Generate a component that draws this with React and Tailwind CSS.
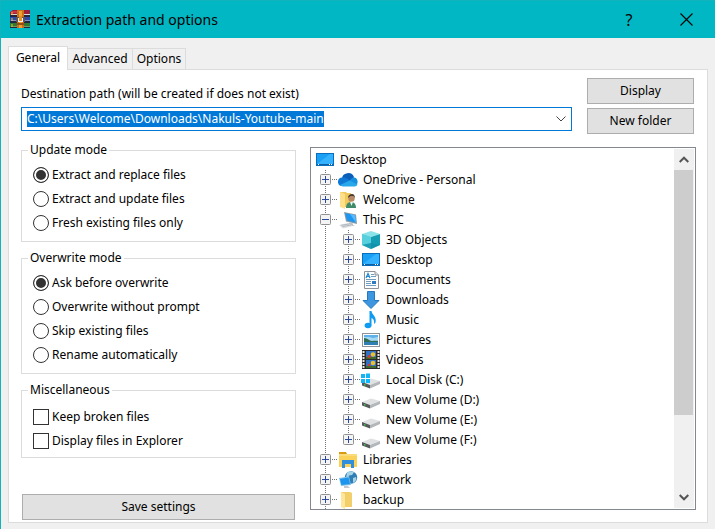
import { useEffect, useRef } from "react";

function ArchiveIcon() {
  return (
    <svg width="20" height="20" viewBox="0 0 20 20" aria-hidden="true">
      <path d="M0 2 3 0H20V5L19 6H1L0 5Z" fill="#9c1f3c" />
      <path d="M1 4H20V6H1Z" fill="#d8dbe0" />
      <path d="M1 1H7V3H1Z" fill="#c8324f" />
      <path d="M0 7H20V12H0Z" fill="#2f49a8" />
      <path d="M1 10H20V12H1Z" fill="#7f8fd0" />
      <path d="M0 13H20V18H0Z" fill="#2f7a34" />
      <path d="M1 16H20V18H1Z" fill="#6f9c6c" />
      <path d="M2 2V5M2 8V11M2 14V17" stroke="#f2c21c" strokeWidth="1" />
      <path d="M0 5H20V7H0ZM0 11H20V13H0ZM0 17H20V18H0Z" fill="#23263c" />
      <path d="M7 0H14V18H7Z" fill="#c9701a" />
      <path d="M9 1H12V18H9Z" fill="#f0a030" />
      <path d="M6 7H15V12H6Z" fill="#5d5560" />
      <path d="M8 8H13V12H8Z" fill="#f4f1ea" />
      <path d="M9 6H12V11H9Z" fill="#e2901f" />
      <path d="M7 13H14V15H7Z" fill="#9a4a14" />
    </svg>
  );
}

function DesktopIcon() {
  return (
    <>
      <rect x="1" y="3" width="18" height="13" fill="#0a6ebd" />
      <rect x="2" y="4" width="16" height="10" fill="#19a0f5" />
      <path d="M2 14 15 4h3v10z" fill="#35b2ff" />
      <path d="M2 14.500h16" stroke="#0b5fa5" />
      <path d="M3 14.500h1M14 14.500h1M16 14.500h1" stroke="#fff" />
    </>
  );
}

function CloudIcon() {
  return (
    <>
      <path d="M4 9a6.200 6 0 0 1 12-2l-2 4-6-1z" fill="#0a5fb8" />
      <path d="M4.200 7.600C6 7.200 8 7.600 9 8.500L16 13l-5 2-8 1A4.300 4.300 0 0 1 4.200 7.600Z" fill="#0f78d4" />
      <path d="M12 10.500c1-2.500 3-3.300 4.500-2.900A4.400 4.400 0 0 1 16.500 16l-5-2z" fill="#1490df" />
      <path d="M2 15 11.500 10.500 19.500 14.500A3.500 3.500 0 0 1 16.500 16.500H4.500Z" fill="#28a8ea" />
    </>
  );
}

function UserIcon() {
  return (
    <>
      <path d="M2 2h6l1 1h4v14H2z" fill="#f0c95c" />
      <path d="M2 2 7 4v15l-5-2z" fill="#ffe08a" />
      <path d="M8 18c0-4 2-6 5-6s5 2 5 6z" fill="#3f8a68" />
      <path d="M12 12h3l-1.500 4z" fill="#e8f3ee" />
      <circle cx="13.500" cy="8.500" r="3.200" fill="#b98a66" />
      <path d="M10 8c0-3 2-4 4-4s3 2 3 4l-1.500-2h-3z" fill="#4b3a2d" />
    </>
  );
}

function ComputerIcon() {
  return (
    <>
      <path d="M6 2 18 4.500 19 14 8 11.500Z" fill="#8f9aa3" />
      <path d="M7 3 17 5.200 18 12.800 9 10.600Z" fill="#1e96f0" />
      <path d="M12 4 17 5.200 18 12.800Z" fill="#55bdff" />
      <path d="M11 12.500 15 13.500 15 15 17 16H10Z" fill="#b7bec4" />
      <path d="M1 15 10 13 15 16 5 18.500Z" fill="#d9dde0" />
      <path d="M3 15.300 11 14M4.500 16.500 13 15" stroke="#a3abb2" strokeWidth="0.7" />
    </>
  );
}

function CubeIcon() {
  return (
    <>
      <path d="M10 1 19 4 10 7 1 4Z" fill="#8be3ea" />
      <path d="M1 4 10 7V19L1 15Z" fill="#35bccd" />
      <path d="M19 4 10 7V19L19 15Z" fill="#159db4" />
      <path d="M10 7 10 13 1 15V4Z" fill="#56d0dc" />
      <path d="M10 13 19 15 10 19 1 15Z" fill="#0e8ba4" opacity="0.6" />
    </>
  );
}

function DocumentIcon() {
  return (
    <>
      <path d="M3.500 1.500H14L17.500 5V18.500H3.500Z" fill="#fdfdfd" stroke="#8c9297" />
      <path d="M14 1.500V5h3.500" fill="#dfe3e6" stroke="#8c9297" />
      <path d="M5 8 7 3.500 9 8M6 6.500H8" stroke="#1e88d8" strokeWidth="1.200" fill="none" />
      <path d="M10 4.500h3M10 6.500h5M5 9.500h10M5 11.500h5M5 13.500h5M5 15.500h10" stroke="#6f9dc0" />
      <rect x="11" y="11" width="4" height="3" fill="#2f7cc0" />
    </>
  );
}

function DownloadIcon() {
  return (
    <path d="M6.500 1.500h7v9h4.500L10 18.500 2 10.500h4.500z" fill="#3d97e0" stroke="#2478c0" />
  );
}

function MusicIcon() {
  return (
    <>
      <ellipse cx="7" cy="15.500" rx="3.400" ry="2.800" fill="#0f9bef" />
      <path d="M8.500 1H10.500C11 5 16 6.500 14.500 12.500L13 14C13.500 10.500 12.500 9 10.500 8V15.500H8.500Z" fill="#0f9bef" />
    </>
  );
}

function PictureIcon() {
  return (
    <>
      <rect x="1.500" y="3.500" width="17" height="13" fill="#fff" stroke="#8d9399" />
      <rect x="3" y="5" width="14" height="10" fill="#a8d8f5" />
      <path d="M3 5h14v2l-5 1-4-1H3z" fill="#5fb1ea" />
      <path d="M3 8c4 0 5 3 8 3 2-.5 4-.5 6 0v2H3z" fill="#2f6e52" />
      <path d="M3 12h14v3H3z" fill="#2d7fb5" />
    </>
  );
}

function VideoIcon() {
  return (
    <>
      <rect x="1" y="0" width="18" height="19" fill="#2b2b2b" />
      <path d="M2.500 1V19M17.500 1V19" stroke="#e6e6e6" strokeWidth="2" strokeDasharray="2 1" />
      <rect x="5" y="1" width="10" height="8" fill="#3272c4" />
      <rect x="5" y="10" width="10" height="8" fill="#3272c4" />
      <path d="M5 7h10v2H5zM5 16h10v2H5z" fill="#3e6b2c" />
      <circle cx="12" cy="4.500" r="2.300" fill="#f0c02a" />
      <circle cx="8" cy="6.500" r="1.600" fill="#d33a2f" />
      <circle cx="12" cy="13" r="2.300" fill="#f0c02a" />
      <circle cx="8" cy="15" r="1.300" fill="#d33a2f" />
    </>
  );
}

function DriveIcon() {
  return (
    <>
      <path d="M1 12 10 8.500 19 11 9 15Z" fill="#dfe1e3" />
      <path d="M1 12 9 15V18.500L1 15.500Z" fill="#55595c" />
      <path d="M19 11V14L9 18.500V15Z" fill="#b3b7ba" />
      <path d="M3 14.200h1.500v1.200H3z" fill="#45d04c" />
    </>
  );
}

function SystemDriveIcon() {
  return (
    <>
      <DriveIcon />
      <path d="M0 4h4v4H0zM5 3.500h4V8H5zM0 9h4v4H0zM5 9h4v4H5z" fill="#12b5f5" />
    </>
  );
}

function LibraryIcon() {
  return (
    <>
      <path d="M1 2h7l1 2h-8z" fill="#d79b13" />
      <path d="M1 4h18v13H1z" fill="#fad25a" />
      <path d="M1 4h18v2H1z" fill="#fbdc7c" />
      <path d="M4 10h12v8h-3v-4H7v4H4z" fill="#2f8fdd" />
    </>
  );
}

function NetworkIcon() {
  return (
    <>
      <circle cx="13" cy="7.500" r="6.200" fill="#2f7fb5" />
      <path d="M9 3c2-2 5-2 7-.5l-2 2.500-3 .5-1 3-2-1zM15 8l3-1c1 3-1 5-3 6z" fill="#a8d4e8" />
      <path d="M1 8 11 6.500 13 15 3 16Z" fill="#7fbfe8" />
      <path d="M2 9 10.500 7.500 12 14 3.500 15Z" fill="#1c95ef" />
      <path d="M6 16h4l2 2H6z" fill="#c2c8cc" />
    </>
  );
}

function FolderIcon() {
  return (
    <>
      <path d="M3 2h9l2 1v14H3z" fill="#f3cf6b" />
      <path d="M3 2 7 4v15l-4-2z" fill="#ffe69b" />
    </>
  );
}

const tree = [
  { level: 0, label: "Desktop", Icon: DesktopIcon },
  { level: 1, label: "OneDrive - Personal", Icon: CloudIcon },
  { level: 1, label: "Welcome", Icon: UserIcon },
  { level: 1, label: "This PC", Icon: ComputerIcon, open: true },
  { level: 2, label: "3D Objects", Icon: CubeIcon },
  { level: 2, label: "Desktop", Icon: DesktopIcon },
  { level: 2, label: "Documents", Icon: DocumentIcon },
  { level: 2, label: "Downloads", Icon: DownloadIcon },
  { level: 2, label: "Music", Icon: MusicIcon },
  { level: 2, label: "Pictures", Icon: PictureIcon },
  { level: 2, label: "Videos", Icon: VideoIcon },
  { level: 2, label: "Local Disk (C:)", Icon: SystemDriveIcon },
  { level: 2, label: "New Volume (D:)", Icon: DriveIcon },
  { level: 2, label: "New Volume (E:)", Icon: DriveIcon },
  { level: 2, label: "New Volume (F:)", Icon: DriveIcon, last: true },
  { level: 1, label: "Libraries", Icon: LibraryIcon },
  { level: 1, label: "Network", Icon: NetworkIcon },
  { level: 1, label: "backup", Icon: FolderIcon },
];

function Guide() {
  return (
    <svg width="23" height="20" className="shrink-0" aria-hidden="true">
      <path d="M11.500 0V20" stroke="#707070" strokeDasharray="1 1" />
    </svg>
  );
}

function Expander({ open, last, label }) {
  return (
    <button type="button" aria-label={(open ? "Collapse " : "Expand ") + label} className="shrink-0">
      <svg width="23" height="20" className="block">
        <path d={last ? "M11.500 0V10" : "M11.500 0V20"} stroke="#707070" strokeDasharray="1 1" />
        <path d="M18 9.500H23" stroke="#707070" strokeDasharray="1 1" />
        <rect x="6.500" y="4.500" width="10" height="10" rx="1" fill="#f4f4f4" stroke="#919191" />
        <path d="M8 9.500H15" stroke="#2c4a9c" />
        {!open && <path d="M11.500 6V13" stroke="#2c4a9c" />}
      </svg>
    </button>
  );
}

function TreeRow({ level, label, Icon, open, last }) {
  return (
    <li role="treeitem" aria-level={level + 1} aria-expanded={level === 0 || !!open} className="flex h-5 items-center">
      {level === 2 && <Guide />}
      {level > 0 && <Expander open={open} last={last} label={label} />}
      <svg width="20" height="20" viewBox="0 0 20 20" className="ml-px mr-[5px] shrink-0" aria-hidden="true">
        <Icon />
      </svg>
      <span className="whitespace-nowrap">{label}</span>
    </li>
  );
}

function Group({ title, className, children }) {
  return (
    <fieldset className={"min-w-0 border border-[#dcdcdc] pl-[11px] " + className}>
      <legend className="-ml-[5px] h-4 px-[2px] leading-4">{title}</legend>
      {children}
    </fieldset>
  );
}

function Choice({ type, name, label, checked }) {
  const shape =
    type === "radio"
      ? "rounded-full checked:bg-[#333333] checked:shadow-[inset_0_0_0_2px_#ffffff]"
      : "checked:bg-[#333333]";
  return (
    <label className="flex h-6 items-center gap-[3px]">
      <input
        type={type}
        name={name}
        defaultChecked={checked}
        className={"size-4 shrink-0 appearance-none border border-[#333333] bg-white " + shape}
      />
      {label}
    </label>
  );
}

function PushButton({ children, className }) {
  return (
    <button type="button" className={"border border-[#adadad] bg-[#e1e1e1] " + className}>
      {children}
    </button>
  );
}

export default function App() {
  const pathRef = useRef(null);

  useEffect(() => {
    pathRef.current.focus();
    pathRef.current.select();
  }, []);

  return (
    <div className="min-h-screen border-l border-t border-[#13b3be] bg-[#f0f0f0] font-['Noto_Sans','DejaVu_Sans',sans-serif] text-[12px] text-black">
      <header className="flex h-[37px] items-center bg-[#00b7c3] pl-[9px] pr-[22px]">
        <ArchiveIcon />
        <h1 className="ml-[6px] grow text-[14px] leading-5">Extraction path and options</h1>
        <button type="button" aria-label="Help" className="w-4 text-[16px] leading-5">?</button>
        <button type="button" aria-label="Close" className="ml-[43px]">
          <svg width="13" height="13" viewBox="0 0 13 13" className="block">
            <path d="M0.500 0.500 12.500 12.500M12.500 0.500 0.500 12.500" stroke="#000" strokeWidth="1.100" />
          </svg>
        </button>
      </header>

      <div className="px-[7px] pb-[6px] pt-2">
        <div role="tablist" className="flex items-end">
          <button type="button" role="tab" aria-selected="true" className="z-10 -mb-px h-6 w-[60px] border border-b-0 border-[#dcdcdc] bg-white pb-[2px]">General</button>
          <button type="button" role="tab" aria-selected="false" className="h-[21px] w-[65px] border-r border-t border-[#dcdcdc]">Advanced</button>
          <button type="button" role="tab" aria-selected="false" className="h-[21px] w-[53px] border-r border-t border-[#dcdcdc]">Options</button>
        </div>

        <main className="border border-[#dcdcdc] bg-white pb-[2px] pl-3 pr-[11px] pt-2">
          <div className="flex gap-[15px] pr-[2px]">
            <div className="min-w-0 grow pt-2">
              <label htmlFor="destination" className="block h-4 leading-4">Destination path (will be created if does not exist)</label>
              <div className="mt-[5px] flex h-6 items-center border border-[#0078d7] pl-[5px] pr-[5px]">
                <input
                  ref={pathRef}
                  id="destination"
                  type="text"
                  defaultValue={"C:\\Users\\Welcome\\Downloads\\Nakuls-Youtube-main"}
                  className="h-4 min-w-0 grow leading-4 outline-none selection:bg-[#0078d7] selection:text-white"
                />
                <button type="button" aria-label="Show recent paths">
                  <svg width="10" height="6" viewBox="0 0 10 6" className="block">
                    <path d="M0.500 0.500 5 5 9.500 0.500" fill="none" stroke="#444" />
                  </svg>
                </button>
              </div>
            </div>
            <div className="flex w-[107px] shrink-0 flex-col gap-1">
              <PushButton className="h-[26px]">Display</PushButton>
              <PushButton className="h-[26px]">New folder</PushButton>
            </div>
          </div>

          <div className="mt-2 flex gap-[14px]">
            <div className="flex w-[275px] shrink-0 flex-col">
              <Group title="Update mode" className="h-[100px]">
                <div className="pt-[5px]">
                  <Choice type="radio" name="update" label="Extract and replace files" checked />
                  <Choice type="radio" name="update" label="Extract and update files" />
                  <Choice type="radio" name="update" label="Fresh existing files only" />
                </div>
              </Group>
              <Group title="Overwrite mode" className="mt-2 h-[124px]">
                <div className="pt-[5px]">
                  <Choice type="radio" name="overwrite" label="Ask before overwrite" checked />
                  <Choice type="radio" name="overwrite" label="Overwrite without prompt" />
                  <Choice type="radio" name="overwrite" label="Skip existing files" />
                  <Choice type="radio" name="overwrite" label="Rename automatically" />
                </div>
              </Group>
              <Group title="Miscellaneous" className="mt-2 h-[76px]">
                <div className="pt-[7px]">
                  <Choice type="checkbox" name="keep" label="Keep broken files" />
                  <Choice type="checkbox" name="show" label="Display files in Explorer" />
                </div>
              </Group>
              <PushButton className="mx-px mt-9 h-[26px]">Save settings</PushButton>
            </div>

            <div className="mt-[5px] flex h-[363px] min-w-0 grow border border-[#828790]">
              <ul role="tree" aria-label="Folders" className="min-w-0 grow overflow-hidden pl-[3px] pt-[2px]">
                {tree.map((node, i) => (
                  <TreeRow key={i} {...node} />
                ))}
              </ul>
              <div className="m-px flex w-5 shrink-0 flex-col bg-[#f0f0f0]">
                <button type="button" aria-label="Scroll up" className="flex h-[21px] shrink-0 items-center justify-center">
                  <svg width="10" height="7" viewBox="0 0 10 7"><path d="M0.700 6 5 1.700 9.300 6" fill="none" stroke="#555" strokeWidth="2" /></svg>
                </button>
                <div className="mr-px h-[245px] bg-[#cdcdcd]" />
                <div className="grow" />
                <button type="button" aria-label="Scroll down" className="flex h-[21px] shrink-0 items-center justify-center">
                  <svg width="10" height="7" viewBox="0 0 10 7"><path d="M0.700 1 5 5.300 9.300 1" fill="none" stroke="#555" strokeWidth="2" /></svg>
                </button>
              </div>
            </div>
          </div>
        </main>
      </div>
    </div>
  );
}
